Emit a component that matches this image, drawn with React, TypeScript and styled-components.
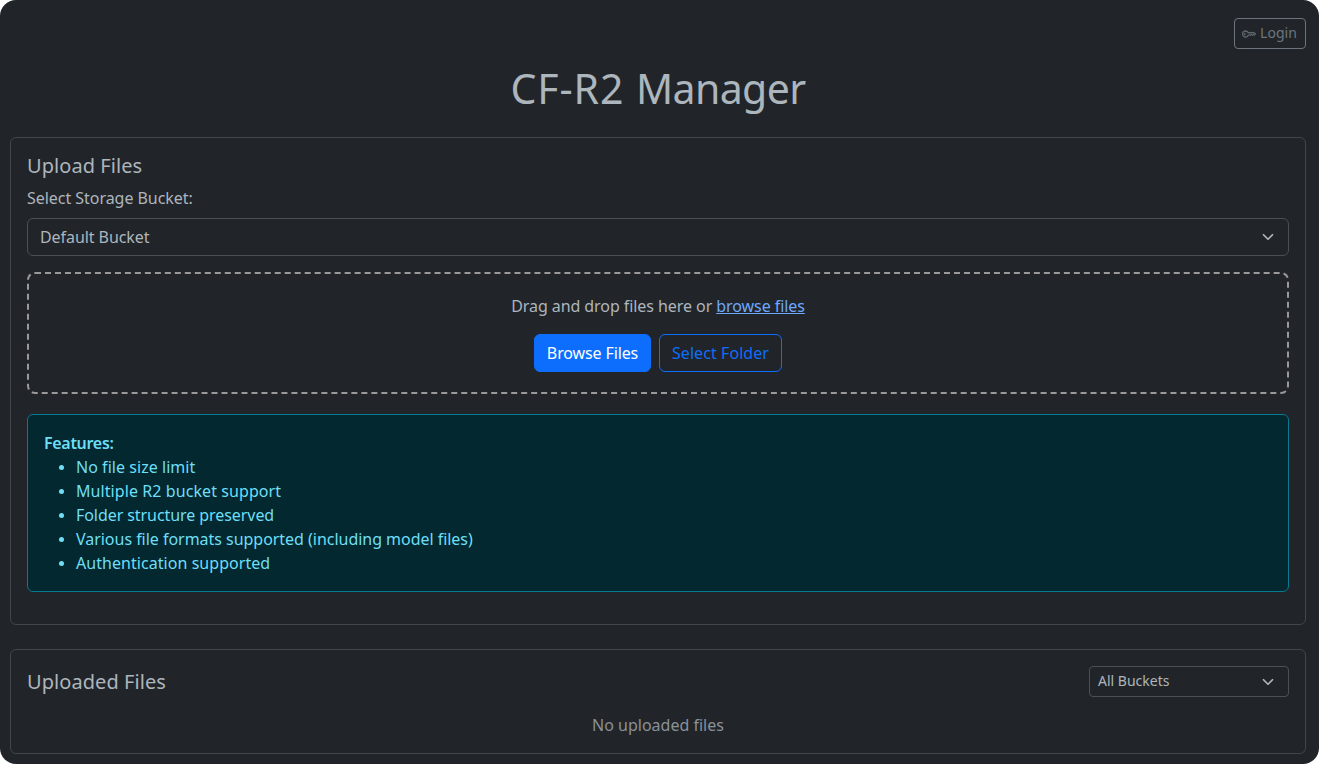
import React from 'react';
import styled, { createGlobalStyle } from 'styled-components';
import { BsKey } from 'react-icons/bs';

const GlobalStyle = createGlobalStyle`
  *, *::before, *::after { box-sizing: border-box; }
  body {
    margin: 0;
    background: #fff;
    color: #adb5bd;
    font-family: 'Noto Sans', 'Open Sans', sans-serif;
    font-size: 16px;
    line-height: 1.5;
  }
`;

const Page = styled.main`
  display: flex;
  flex-direction: column;
  height: 764px;
  padding: 18px 13px 10px 10px;
  border-radius: 16px;
  background: #212529;
`;

const TopBar = styled.header`
  display: flex;
  justify-content: flex-end;
  margin-bottom: 15px;
`;

const LoginButton = styled.button`
  display: flex;
  align-items: center;
  gap: 4px;
  width: 72px;
  height: 31px;
  padding: 0 0 0 7px;
  border: 1px solid #6c757d;
  border-radius: 4px;
  background: transparent;
  color: #6c757d;
  font: inherit;
  font-size: 14px;
  line-height: 21px;
  letter-spacing: 0.05px;

  svg { stroke: currentColor; stroke-width: 0.3; }
  span { padding-bottom: 2px; }
`;

const Title = styled.h1`
  margin: 0 0 25px;
  font-size: 41px;
  font-weight: 400;
  line-height: 48px;
  letter-spacing: -0.6px;
  text-align: center;
`;

const TitlePrefix = styled.span`
  letter-spacing: 0.9px;
`;

const Card = styled.section<{ $spaced?: boolean }>`
  padding: 16px;
  margin-bottom: ${(p) => (p.$spaced ? 24 : 0)}px;
  border: 1px solid #42464a;
  border-radius: 6px;
`;

const CardTitle = styled.h5`
  margin: 0;
  font-size: 20px;
  font-weight: 400;
  line-height: 24px;
  letter-spacing: 0.06px;
`;

const Label = styled.label`
  display: block;
  margin: 8px 0;
  letter-spacing: -0.04px;
`;

const SelectBox = styled.button<{ $small?: boolean }>`
  display: flex;
  align-items: center;
  justify-content: space-between;
  width: ${(p) => (p.$small ? '200px' : '100%')};
  height: ${(p) => (p.$small ? 31 : 38)}px;
  padding: 0 12px 0 ${(p) => (p.$small ? 8 : 12)}px;
  border: 1px solid #495057;
  border-radius: ${(p) => (p.$small ? 4 : 6)}px;
  background: #212529;
  color: #adb5bd;
  font: inherit;
  font-size: ${(p) => (p.$small ? 14 : 16)}px;
  line-height: ${(p) => (p.$small ? 21 : 24)}px;
  letter-spacing: ${(p) => (p.$small ? 0 : -0.07)}px;

  span { padding-bottom: ${(p) => (p.$small ? 2 : 0)}px; }
`;

const DropZone = styled.div`
  display: flex;
  flex-direction: column;
  align-items: center;
  gap: 16px;
  margin: 16px 0 20px;
  padding: 20px;
  border: 2px dashed #999;
  border-radius: 8px;
`;

const DropText = styled.p`
  margin: 0;
  letter-spacing: -0.07px;
`;

const BrowseLink = styled.a`
  color: #6ea8fe;
  text-decoration: underline;
`;

const ButtonRow = styled.div`
  display: flex;
  gap: 8px;
`;

const ActionButton = styled.button<{ $primary?: boolean }>`
  width: ${(p) => (p.$primary ? 117 : 123)}px;
  height: 38px;
  padding: 0;
  border: 1px solid #0d6efd;
  border-radius: 6px;
  background: ${(p) => (p.$primary ? '#0d6efd' : 'transparent')};
  color: ${(p) => (p.$primary ? '#fff' : '#0d6efd')};
  font: inherit;
  letter-spacing: ${(p) => (p.$primary ? -0.12 : 0.07)}px;
`;

const Alert = styled.div`
  padding: 16px;
  margin-bottom: 16px;
  border: 1px solid #087990;
  border-radius: 6px;
  background: #032830;
  color: #6edff6;
`;

const AlertHeading = styled.strong`
  display: block;
  font-weight: 600;
  letter-spacing: -0.3px;
`;

const FeatureList = styled.ul`
  margin: 0;
  padding-left: 32px;
`;

const Feature = styled.li<{ $tracking: number }>`
  letter-spacing: ${(p) => p.$tracking}px;

  &::marker { font-size: 14px; }
`;

const CardHeader = styled.div`
  display: flex;
  align-items: center;
  justify-content: space-between;
  margin-bottom: 16px;
`;

const EmptyNote = styled.p`
  margin: 0;
  color: #8a9198;
  text-align: center;
`;

const Chevron = () => (
  <svg width="16" height="16" viewBox="0 0 16 16" fill="none" stroke="#adb5bd" strokeWidth="2.3" strokeLinecap="round" strokeLinejoin="round">
    <path d="m2 5 6 6 6-6" transform="translate(2 2) scale(.75)" />
  </svg>
);

const features = [
  { text: 'No file size limit', tracking: 0.04 },
  { text: 'Multiple R2 bucket support', tracking: 0.08 },
  { text: 'Folder structure preserved', tracking: -0.07 },
  { text: 'Various file formats supported (including model files)', tracking: -0.03 },
  { text: 'Authentication supported', tracking: 0.05 },
];

export default function App() {
  return (
    <>
      <GlobalStyle />
      <Page>
        <TopBar>
          <LoginButton><BsKey size={14} /><span>Login</span></LoginButton>
        </TopBar>
        <Title><TitlePrefix>CF-R2 </TitlePrefix>Manager</Title>
        <Card $spaced>
          <CardTitle>Upload Files</CardTitle>
          <Label>Select Storage Bucket:</Label>
          <SelectBox><span>Default Bucket</span><Chevron /></SelectBox>
          <DropZone>
            <DropText>Drag and drop files here or <BrowseLink>browse files</BrowseLink></DropText>
            <ButtonRow>
              <ActionButton $primary>Browse Files</ActionButton>
              <ActionButton>Select Folder</ActionButton>
            </ButtonRow>
          </DropZone>
          <Alert>
            <AlertHeading>Features:</AlertHeading>
            <FeatureList>
              {features.map((f) => <Feature key={f.text} $tracking={f.tracking}>{f.text}</Feature>)}
            </FeatureList>
          </Alert>
        </Card>
        <Card>
          <CardHeader>
            <CardTitle>Uploaded Files</CardTitle>
            <SelectBox $small><span>All Buckets</span><Chevron /></SelectBox>
          </CardHeader>
          <EmptyNote>No uploaded files</EmptyNote>
        </Card>
      </Page>
    </>
  );
}
